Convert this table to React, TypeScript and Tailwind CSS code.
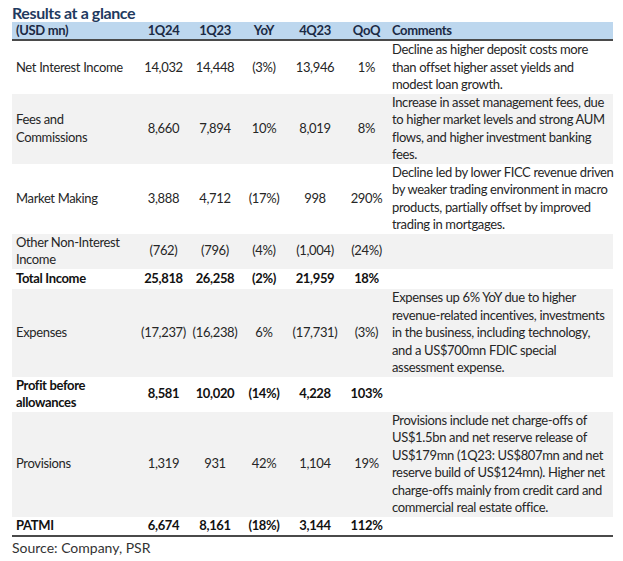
import React from "react";

type Row = {
  label: string[];
  vals: string[];
  comment?: string[];
  bold?: boolean;
  gray?: boolean;
  h?: string;
};

const rows: Row[] = [
  {
    label: ["Net Interest Income"],
    vals: ["14,032", "14,448", "(3%)", "13,946", "1%"],
    comment: [
      "Decline as higher deposit costs more",
      "than offset higher asset yields and",
      "modest loan growth.",
    ],
  },
  {
    label: ["Fees and", "Commissions"],
    vals: ["8,660", "7,894", "10%", "8,019", "8%"],
    gray: true,
    comment: [
      "Increase in asset management fees, due",
      "to higher market levels and strong AUM",
      "flows, and higher investment banking",
      "fees.",
    ],
  },
  {
    label: ["Market Making"],
    vals: ["3,888", "4,712", "(17%)", "998", "290%"],
    comment: [
      "Decline led by lower FICC revenue driven",
      "by weaker trading environment in macro",
      "products, partially offset by improved",
      "trading in mortgages.",
    ],
  },
  {
    label: ["Other Non-Interest", "Income"],
    vals: ["(762)", "(796)", "(4%)", "(1,004)", "(24%)"],
    gray: true,
    h: "h-[35px]",
  },
  {
    label: ["Total Income"],
    vals: ["25,818", "26,258", "(2%)", "21,959", "18%"],
    bold: true,
    h: "h-[20.5px]",
  },
  {
    label: ["Expenses"],
    vals: ["(17,237)", "(16,238)", "6%", "(17,731)", "(3%)"],
    gray: true,
    comment: [
      "Expenses up 6% YoY due to higher",
      "revenue-related incentives, investments",
      "in the business, including technology,",
      "and a US$700mn FDIC special",
      "assessment expense.",
    ],
  },
  {
    label: ["Profit before", "allowances"],
    vals: ["8,581", "10,020", "(14%)", "4,228", "103%"],
    bold: true,
    h: "h-[35px]",
  },
  {
    label: ["Provisions"],
    vals: ["1,319", "931", "42%", "1,104", "19%"],
    gray: true,
    comment: [
      "Provisions include net charge-offs of",
      "US$1.5bn and net reserve release of",
      "US$179mn (1Q23: US$807mn and net",
      "reserve build of US$124mn). Higher net",
      "charge-offs mainly from credit card and",
      "commercial real estate office.",
    ],
  },
  {
    label: ["PATMI"],
    vals: ["6,674", "8,161", "(18%)", "3,144", "112%"],
    bold: true,
    h: "h-[20px]",
  },
];

const grid = "grid grid-cols-[126px_51px_52px_46px_56px_47px_223px]";

export default function App() {
  return (
    <div
      className="w-[623px] h-[561px] bg-white text-[#262626] pt-[4px]"
      style={{ fontFamily: "Lato, 'Liberation Sans', sans-serif" }}
    >
      <div className="ml-[12px] text-[16px] leading-[18px] font-bold tracking-[-0.4px] text-[#1f3a60]">
        Results at a glance
      </div>
      <div className="ml-[12px] w-[601px] text-[13px] leading-[17.5px] tracking-[-0.35px]">
        <div className={`${grid} bg-[#bdd7ee] h-[19px] border-b-2 border-[#4a4a4a] font-bold text-[#1b2a44]`}>
          <div className="pl-[4px] flex items-center">(USD mn)</div>
          <div className="flex items-center justify-center">1Q24</div>
          <div className="flex items-center justify-center">1Q23</div>
          <div className="flex items-center justify-center">YoY</div>
          <div className="flex items-center justify-center">4Q23</div>
          <div className="flex items-center justify-center">QoQ</div>
          <div className="pl-[2px] flex items-center">Comments</div>
        </div>
        {rows.map((r, i) => (
          <div
            key={i}
            className={`${grid} ${r.gray ? "bg-[#f2f2f2]" : "bg-white"} ${r.bold ? "font-bold text-[#111111]" : ""} ${r.h ?? ""} ${i === rows.length - 1 ? "border-b-2 border-[#4a4a4a]" : ""}`}
          >
            <div className="pl-[4px] flex flex-col justify-center">
              {r.label.map((l, j) => (
                <div key={j} className="whitespace-nowrap">{l}</div>
              ))}
            </div>
            {r.vals.map((v, j) => (
              <div key={j} className="flex items-center justify-center whitespace-nowrap">
                {v}
              </div>
            ))}
            <div className="pl-[2px] flex flex-col justify-center">
              {(r.comment ?? []).map((c, j) => (
                <div key={j} className="whitespace-nowrap">{c}</div>
              ))}
            </div>
          </div>
        ))}
      </div>
      <div className="ml-[12px] mt-[2px] text-[14px] leading-[18px] text-[#333333]">
        Source: Company, PSR
      </div>
    </div>
  );
}
